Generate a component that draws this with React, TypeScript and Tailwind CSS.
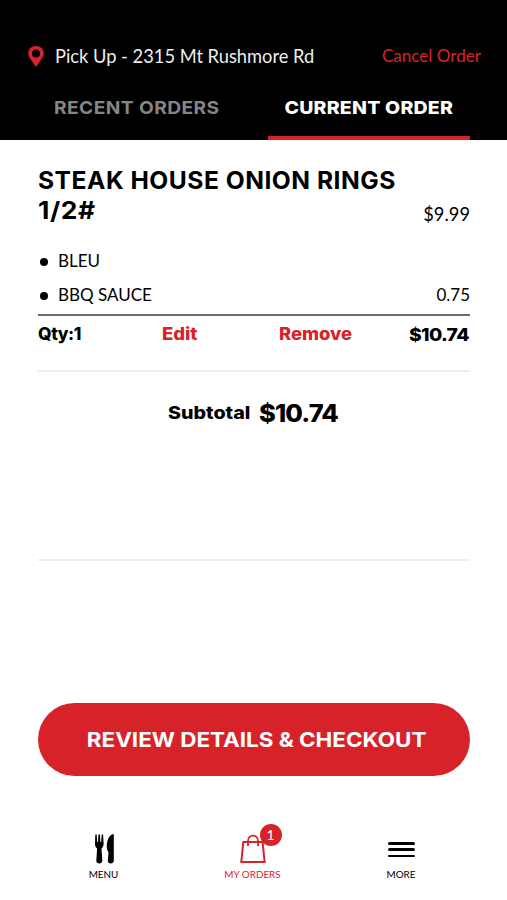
import React from "react";

function PinIcon() {
  return (
    <svg className="block h-[21px] w-4" viewBox="0 0 16 21" fill="#d8222a">
      <path
        fillRule="evenodd"
        d="M8 0C3.400 0 .2 3.100.2 7.300.2 10 2 12.100 3.300 14.300L8 21l4.700-6.700C14 12.100 15.800 10 15.800 7.300 15.800 3.100 12.600 0 8 0Zm0 3.500a4 4 0 1 1 0 8 4 4 0 0 1 0-8Z"
      />
    </svg>
  );
}

function MenuIcon() {
  return (
    <svg className="block h-[30px] w-[20px]" viewBox="0 0 20 30" fill="#000">
      <path d="M.3.7Q1 0 1.700.7L2.200 8h.8L3.400.7Q4.200 0 5 .7L5.400 8h.8L6.700.7Q7.400 0 8.100.7L8.600 9.500C8.600 12 7.700 13.500 6.500 14.500L7.300 27c0 3.300-6 3.300-6 0L2.100 14.500C.8 13.500-.1 12 0 9.500Z" />
      <path d="M17.500.2Q18.800-.2 18.800 1.200V27c0 3.300-6 3.300-6 0L13.500 18C12 16.500 11.400 13.500 11.900 10 12.500 5 14.500 1.200 17.500.2Z" />
    </svg>
  );
}

function BagIcon() {
  return (
    <svg className="block h-[30px] w-[26px]" viewBox="0 0 26 30" fill="none" stroke="#d8222a">
      <path d="M3.300 8h19.300l2 20H1.300Z" strokeWidth="2" />
      <path d="M8 12V7c0-7.300 10-7.300 10 0v5" strokeWidth="1.800" />
    </svg>
  );
}

export default function App() {
  return (
    <div className="flex h-[900px] w-[507px] flex-col overflow-hidden bg-white font-['Lato',sans-serif] text-black">
      <header className="flex h-[140px] flex-col bg-black">
        <div className="flex h-[72px] items-end pr-[26px] pl-[28px]">
          <div className="pb-[5px]">
            <PinIcon />
          </div>
          <span className="ml-[11px] pb-1 text-[18.3px] leading-6 whitespace-nowrap text-[#eee]">
            Pick Up - 2315 Mt Rushmore Rd
          </span>
          <span className="ml-auto pb-1 text-[17.1px] leading-6 whitespace-nowrap text-[#d8222a]">Cancel Order</span>
        </div>
        <nav className="flex h-[68px] pl-[5px] font-['Inter',sans-serif] text-[18px] font-bold">
          <div className="w-[263px] pt-6 text-center leading-6 whitespace-nowrap text-[#858585]">
            <span className="inline-block scale-x-[1.065] tracking-[0.4px]">RECENT ORDERS</span>
          </div>
          <div className="w-[202px] border-b-4 border-[#d8222a] pt-6 text-center leading-6 whitespace-nowrap text-white">
            <span className="inline-block scale-x-[1.085] font-extrabold tracking-[0.2px]">CURRENT ORDER</span>
          </div>
        </nav>
      </header>

      <main className="flex h-[664px] flex-col pr-[37px] pl-[38px]">
        <section className="h-[176px] border-b-2 border-[#6b6b6b] pt-[26px]">
          <div className="flex h-[60px] justify-between">
            <h1 className="font-['Inter',sans-serif] text-[24px] leading-[30px] font-bold tracking-[0.5px] whitespace-nowrap">
              <span className="inline-block origin-left scale-x-[1.025]">STEAK HOUSE ONION RINGS</span>
              <br />
              <span className="inline-block origin-left scale-x-[1.1]">1/2#</span>
            </h1>
            <span className="pt-[36px] text-[18.3px] leading-6">$9.99</span>
          </div>
          <ul className="mt-[18px] text-[17px] leading-[34px]">
            <li className="flex h-[34px] items-center">
              <span className="mt-px ml-[2px] h-2 w-2 rounded-full bg-black" />
              <span className="ml-[10px]">BLEU</span>
            </li>
            <li className="flex h-[34px] items-center">
              <span className="mt-px ml-[2px] h-2 w-2 rounded-full bg-black" />
              <span className="ml-[10px]">BBQ SAUCE</span>
              <span className="ml-auto">0.75</span>
            </li>
          </ul>
        </section>
        <section className="flex h-[56px] border-b-2 border-[#ededed] pt-[6px] font-['Inter',sans-serif] text-[17px] leading-6 font-extrabold">
          <div className="w-[124px]">
            <span className="inline-block origin-left scale-x-[1.02] tracking-[-0.4px]">Qty:1</span>
          </div>
          <div className="w-[117px] text-[#d8222a]">
            <span className="inline-block origin-left scale-x-[1.09]">Edit</span>
          </div>
          <span className="inline-block origin-left scale-x-[1.08] text-[#d8222a]">Remove</span>
          <span className="ml-auto inline-block origin-right scale-x-[1.07] pt-px pr-px text-[18px] tracking-[-0.6px]">
            $10.74
          </span>
        </section>
        <section className="flex h-[189px] border-b-2 border-[#ededed] pt-[25px] pl-[130px] font-['Inter',sans-serif]">
          <div className="w-[91px]">
            <span className="inline-block origin-left scale-x-[1.125] text-[17.5px] leading-8 font-extrabold">
              Subtotal
            </span>
          </div>
          <span className="inline-block origin-left scale-x-[1.06] text-[24px] leading-[33px] font-extrabold tracking-[-0.8px]">
            $10.74
          </span>
        </section>
        <button className="mt-[142px] h-[73px] rounded-full bg-[#d8222a] pl-[5px] font-['Inter',sans-serif] text-[20px] font-bold whitespace-nowrap text-white">
          <span className="inline-block scale-x-[1.12]">REVIEW DETAILS &amp; CHECKOUT</span>
        </button>
      </main>

      <footer className="flex h-24 pl-[29px] text-[9.9px] leading-[14px]">
        <div className="flex w-[149px] flex-col items-center pt-[30px]">
          <div className="pl-[2px]">
            <MenuIcon />
          </div>
          <span className="mt-[3px]">MENU</span>
        </div>
        <div className="flex w-[149px] flex-col items-center pt-[30px] text-[#d8222a]">
          <div className="relative">
            <BagIcon />
            <span className="absolute -top-[10px] left-[20px] flex h-[22px] w-[22px] items-center justify-center rounded-full bg-[#d8222a] text-[14px] text-white">
              1
            </span>
          </div>
          <span className="mt-[3px]">MY ORDERS</span>
        </div>
        <div className="flex w-[149px] flex-col items-center pt-[38px] pr-px">
          <div className="flex h-[15px] w-[27px] flex-col justify-between">
            <span className="h-[2.500px] rounded-full bg-black" />
            <span className="h-[2.500px] rounded-full bg-black" />
            <span className="h-[2.500px] rounded-full bg-black" />
          </div>
          <span className="mt-[10px]">MORE</span>
        </div>
      </footer>
    </div>
  );
}
